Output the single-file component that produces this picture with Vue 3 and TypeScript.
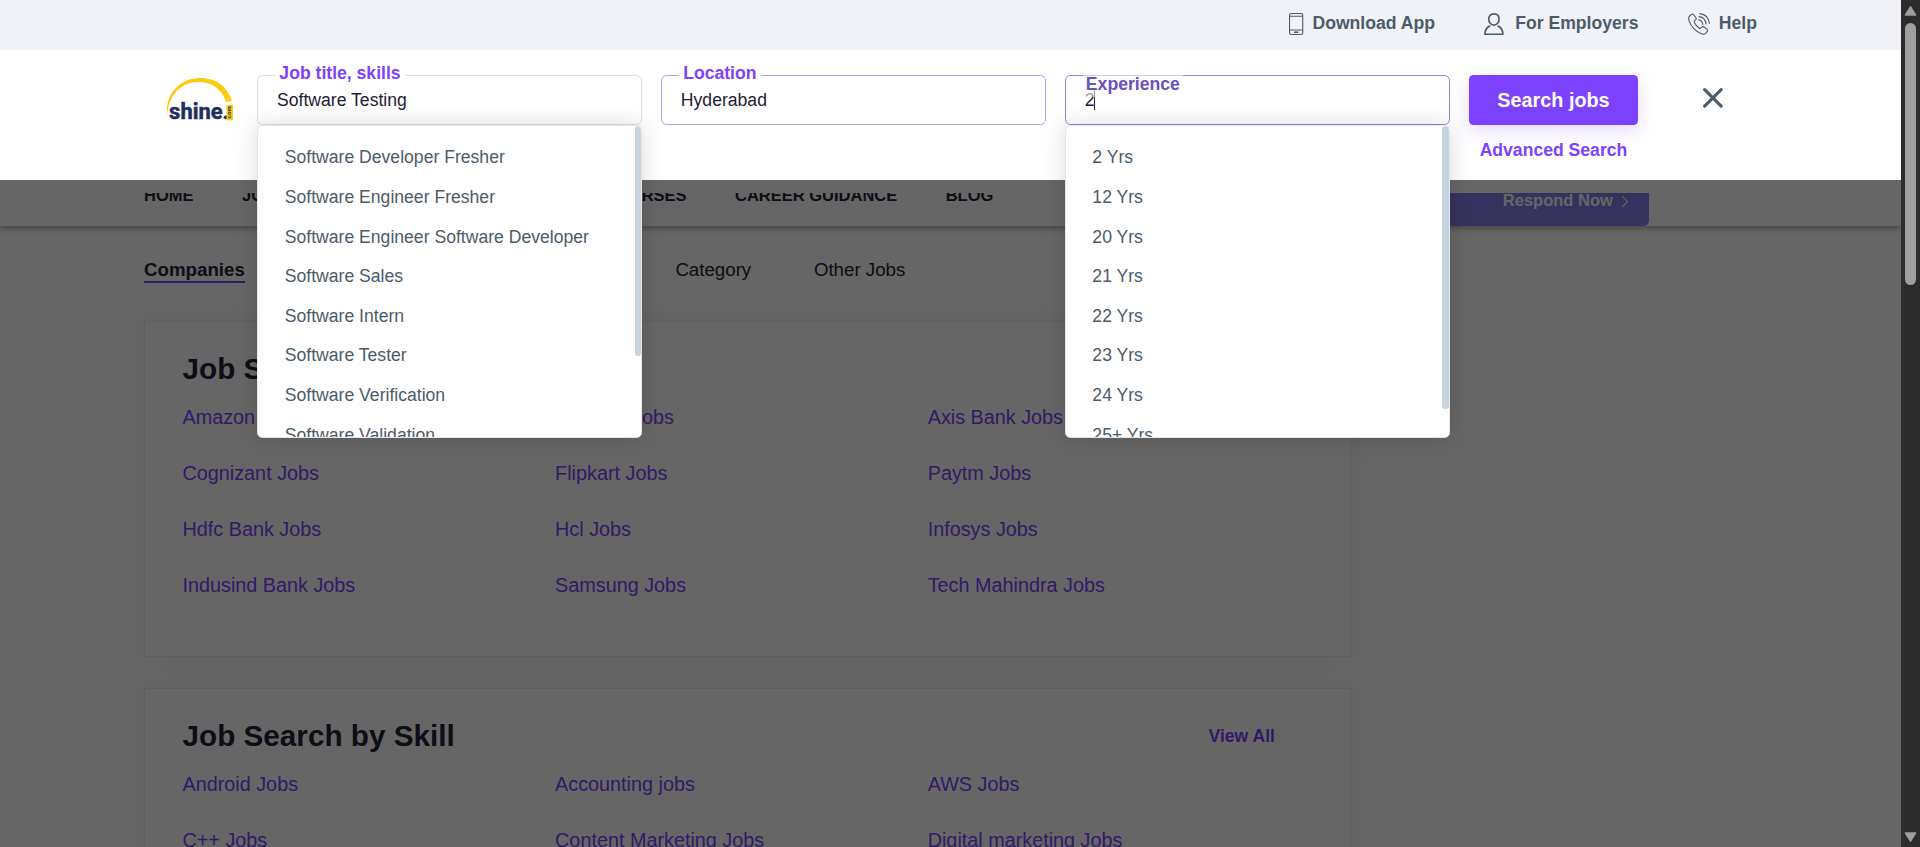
<script setup lang="ts">
import { ref } from 'vue'

interface Field {
  id: string
  label: string
  tone: string
  options: string[]
  thumb: string
}

const values = ref<Record<string, string>>({
  skills: 'Software Testing',
  location: 'Hyderabad',
  experience: '2',
})

const fields: Field[] = [
  {
    id: 'skills',
    label: 'Job title, skills',
    tone: 'plain',
    thumb: 'short',
    options: [
      'Software Developer Fresher',
      'Software Engineer Fresher',
      'Software Engineer Software Developer',
      'Software Sales',
      'Software Intern',
      'Software Tester',
      'Software Verification',
      'Software Validation',
    ],
  },
  { id: 'location', label: 'Location', tone: 'accent', thumb: '', options: [] },
  {
    id: 'experience',
    label: 'Experience',
    tone: 'active',
    thumb: 'long',
    options: ['2 Yrs', '12 Yrs', '20 Yrs', '21 Yrs', '22 Yrs', '23 Yrs', '24 Yrs', '25+ Yrs'],
  },
]

const cards = [
  {
    title: 'Job Search by Company',
    viewAll: false,
    links: [
      'Amazon Jobs', 'Amdocs Jobs', 'Axis Bank Jobs',
      'Cognizant Jobs', 'Flipkart Jobs', 'Paytm Jobs',
      'Hdfc Bank Jobs', 'Hcl Jobs', 'Infosys Jobs',
      'Indusind Bank Jobs', 'Samsung Jobs', 'Tech Mahindra Jobs',
    ],
  },
  {
    title: 'Job Search by Skill',
    viewAll: true,
    links: [
      'Android Jobs', 'Accounting jobs', 'AWS Jobs',
      'C++ Jobs', 'Content Marketing Jobs', 'Digital marketing Jobs',
    ],
  },
]
</script>

<template>
  <div class="window">
    <div class="page">
      <div class="backdrop-page">
        <div class="masthead"></div>
        <nav class="nav" aria-label="Main">
          <div class="nav-lead">
            <a href="#">HOME</a>
            <a href="#">JOBS</a>
          </div>
          <a href="#">COURSES</a>
          <a href="#">CAREER GUIDANCE</a>
          <a href="#">BLOG</a>
          <a href="#" class="respond">
            Respond Now
            <svg width="7" height="12" viewBox="0 0 7 12" aria-hidden="true">
              <path d="M1 1l5 5-5 5" fill="none" stroke="currentColor" />
            </svg>
          </a>
        </nav>
        <div class="tabs">
          <div class="tabs-lead"><a href="#" class="current">Companies</a></div>
          <a href="#">Category</a>
          <a href="#">Other Jobs</a>
        </div>
        <section v-for="card in cards" :key="card.title" class="card">
          <div class="card-head">
            <h2>{{ card.title }}</h2>
            <a v-if="card.viewAll" href="#">View All</a>
          </div>
          <div class="card-links">
            <a v-for="link in card.links" :key="link" href="#">{{ link }}</a>
          </div>
        </section>
        <div class="shade"></div>
      </div>

      <header class="top">
        <div class="topbar">
          <a href="#">
            <svg width="13" height="20" viewBox="0 0 13 20" aria-hidden="true">
              <g fill="none" stroke="currentColor">
                <rect x=".5" y=".5" width="12" height="19" rx="1.5" />
                <path d="M.5 3h12M.5 15.5h12" />
                <path d="M4.5 17.5h4" stroke-width="1.4" />
              </g>
            </svg>
            Download App
          </a>
          <a href="#" class="employers">
            <svg width="18" height="20" viewBox="0 0 18 20" aria-hidden="true">
              <g fill="none" stroke="currentColor" stroke-width="1.5" stroke-linejoin="round">
                <path d="M9 .8c3 0 4.7 2 4.7 4.8S11.800 11 9 11 4.300 8.400 4.300 5.600 6 .8 9 .8z" />
                <path d="M5.600 11.700C2.500 12.900 1 15.800.8 19.300h16.400c-.2-3.500-1.700-6.400-4.800-7.600" />
              </g>
            </svg>
            For Employers
          </a>
          <a href="#">
            <svg width="20" height="20" viewBox="0 0 20 20" aria-hidden="true">
              <g fill="none" stroke="currentColor" stroke-linecap="round" stroke-linejoin="round">
                <path d="M3.200 1.300c.7-.6 1.500-.4 2 .3l1.900 2.600c.5.7.4 1.400-.2 2l-.8.7c-.6.5-.6 1-.3 1.700.9 1.800 2.400 3.700 4.200 5 .6.5 1.200.5 1.700 0l.8-.8c.6-.6 1.300-.6 2-.1l2.700 2c.8.6.9 1.300.3 2l-1.300 1.500c-1 1.100-2.400 1.300-4.100.7C7.200 17.200 2.600 12.200.9 7 .3 5 .6 3.600 1.600 2.700z" />
                <path d="M9.500 6.200c2.200.4 3.600 1.900 4 4.100M10 3.300c3.600.5 6 3 6.400 6.600M10.700.6c4.800.6 8.200 4 8.700 8.900" />
              </g>
            </svg>
            Help
          </a>
        </div>

        <form class="search" @submit.prevent>
          <a href="#" class="logo" aria-label="shine.com">
            <svg width="61" height="39" viewBox="0 0 67 43" aria-hidden="true">
              <path d="M.8 38C-1.500 16 14 0 34 0c16 0 28 9 32 23l-6 1C56 11 46 4 32.500 4 15 4 2.500 17 .8 38z" fill="#fbcc10" />
              <text x="3" y="41" class="logo-name">shine.</text>
              <rect x="60.500" y="27" width="6.500" height="15.500" fill="#fbcc10" />
              <text transform="translate(65.500 40.500) rotate(-90)" class="logo-tld">com</text>
            </svg>
          </a>

          <div v-for="f in fields" :key="f.id" class="field" :class="f.tone">
            <input :id="f.id" v-model="values[f.id]" type="text" autocomplete="off" />
            <span v-if="f.tone === 'active'" class="caret"></span>
            <label :for="f.id">{{ f.label }}</label>
            <div v-if="f.options.length" class="menu">
              <ul role="listbox" :aria-label="f.label">
                <li v-for="o in f.options" :key="o" role="option">{{ o }}</li>
              </ul>
              <span class="menu-thumb" :class="f.thumb"></span>
            </div>
          </div>

          <div class="actions">
            <button type="submit" class="submit">Search jobs</button>
            <a href="#">Advanced Search</a>
          </div>

          <button type="button" class="close" aria-label="Close search">
            <svg width="18" height="18" viewBox="0 0 18 18" aria-hidden="true">
              <path d="M1.500 1.500l15 15M16.500 1.500l-15 15" fill="none" stroke="currentColor" stroke-width="2.800" stroke-linecap="round" />
            </svg>
          </button>
        </form>
      </header>
    </div>

    <div class="scrollbar" aria-hidden="true">
      <svg width="13" height="10" viewBox="0 0 13 10"><path d="M6.500 1l5 8h-10z" fill="#9f9f9f" stroke="#9f9f9f" stroke-width="1.500" stroke-linejoin="round" /></svg>
      <div class="scroll-thumb"></div>
      <svg class="down" width="13" height="10" viewBox="0 0 13 10"><path d="M6.500 9l5-8h-10z" fill="#9f9f9f" stroke="#9f9f9f" stroke-width="1.500" stroke-linejoin="round" /></svg>
    </div>
  </div>
</template>

<style>
body {
  margin: 0;
  overflow: hidden;
}
</style>

<style scoped>
.window {
  display: flex;
  height: 100vh;
  overflow: hidden;
  font-family: 'Liberation Sans', Arial, sans-serif;
}
.page {
  zoom: 1.1;
  position: relative;
  flex: 1;
  min-width: 0;
  overflow: hidden;
  background: #fff;
  font-size: 16px;
  line-height: 18px;
}
a {
  color: inherit;
  text-decoration: none;
}

/* Page behind the search panel */
.backdrop-page {
  position: relative;
  min-height: 100%;
}
.masthead {
  position: relative;
  z-index: 1;
  height: 175px;
  background: #fff;
}
.nav {
  display: flex;
  align-items: center;
  gap: 44px;
  height: 54px;
  margin-top: -24px;
  padding: 0 131px;
  background: #fff;
  box-shadow: 0 2px 6px rgba(0, 0, 0, 0.35);
  color: #212338;
  font-size: 15px;
  font-weight: 700;
}
.nav-lead {
  display: flex;
  gap: 44px;
  width: 375px;
}
.respond {
  display: flex;
  align-items: center;
  gap: 7px;
  box-sizing: border-box;
  height: 54px;
  margin: 0 98px 0 auto;
  padding: 10px 19px 0 160px;
  border-radius: 5px;
  background: #857fe8;
  color: #fff;
}
.tabs {
  display: flex;
  gap: 57px;
  padding: 31px 131px 0;
  margin-bottom: 35px;
  color: #212338;
  font-size: 17px;
  line-height: 19px;
}
.tabs-lead {
  width: 426px;
}
.current {
  display: inline-block;
  border-bottom: 2px solid #7d42ff;
  font-weight: 700;
}
.card {
  box-sizing: border-box;
  width: 1097px;
  margin: 0 0 28px 131px;
  padding: 25px 45px 54px 34px;
  border: 1px solid #ebebeb;
  box-shadow: 0 0 24px rgba(0, 0, 0, 0.06);
}
.card-head {
  display: flex;
  align-items: center;
  justify-content: space-between;
  margin-bottom: 17px;
  padding-right: 23px;
}
.card-head h2 {
  margin: 0;
  color: #212338;
  font-size: 27px;
  line-height: 34px;
}
.card-head a {
  padding-top: 2px;
  color: #7d42ff;
  font-weight: 700;
}
.card-links {
  display: grid;
  grid-template-columns: repeat(3, 1fr);
  row-gap: 30px;
  color: #7d42ff;
  font-size: 18px;
  line-height: 21px;
}
.shade {
  position: absolute;
  inset: 0;
  z-index: 2;
  background: rgba(0, 0, 0, 0.6);
}

/* Search panel */
.top {
  position: absolute;
  inset: 0 0 auto;
  z-index: 3;
  background: #fff;
}
.topbar {
  display: flex;
  align-items: center;
  justify-content: flex-end;
  gap: 45px;
  box-sizing: border-box;
  height: 45px;
  padding: 0 131px 1px;
  background: #f1f2f8;
  color: #4c5b69;
  font-weight: 700;
}
.topbar a {
  display: flex;
  align-items: center;
  gap: 8px;
}
.topbar .employers {
  gap: 10px;
}
.search {
  display: flex;
  align-items: flex-start;
  gap: 17px;
  box-sizing: border-box;
  height: 119px;
  padding: 23px 162px 0 151px;
}
.logo {
  width: 61px;
  margin: 3px 5px 0 0;
}
.logo svg {
  display: block;
  overflow: visible;
}
.logo-name {
  fill: #1f2f5f;
  stroke: #1f2f5f;
  stroke-width: 0.5px;
  font: 700 22px Roboto, 'Liberation Sans', sans-serif;
}
.logo-tld {
  fill: #1f2f5f;
  font: 700 6px 'Liberation Sans', sans-serif;
}
.field {
  position: relative;
  flex: 1;
  min-width: 0;
}
.field input {
  display: block;
  box-sizing: border-box;
  width: 100%;
  height: 46px;
  padding: 0 17px;
  border: 1px solid #dddde2;
  border-radius: 5px;
  outline: 0;
  background: #fff;
  color: #1e2035;
  font: 16px 'Liberation Sans', Arial, sans-serif;
}
.accent input {
  border-color: #b79bee;
}
.active input {
  border-color: #9c7be6;
}
.field label {
  position: absolute;
  top: -10px;
  left: 16px;
  padding: 0 4px;
  background: #fff;
  color: #7d42ff;
  font-weight: 700;
}
.field.active label {
  top: 0;
  padding: 0 3px 2px;
  background: rgba(255, 255, 255, 0.55);
  color: #6b50c0;
}
.caret {
  position: absolute;
  top: 14px;
  left: 26px;
  width: 1px;
  height: 18px;
  background: #1e2035;
}
.menu {
  position: absolute;
  top: 100%;
  left: 0;
  right: 0;
  box-sizing: border-box;
  height: 284px;
  overflow: hidden;
  border: 1px solid #e6e6ea;
  border-radius: 5px;
  background: #fff;
  box-shadow: 0 0 20px rgba(0, 0, 0, 0.15);
}
.menu ul {
  margin: 0;
  padding: 11px 24px;
  list-style: none;
  color: #4c5b69;
  line-height: 36px;
}
.menu-thumb {
  position: absolute;
  top: 0;
  right: 0;
  width: 6px;
  border-radius: 3px;
  background: #c6d5df;
}
.short {
  height: 74%;
}
.long {
  height: 91%;
}
.actions {
  display: flex;
  flex-direction: column;
  align-items: center;
  gap: 14px;
  width: 154px;
  color: #7d42ff;
  font-weight: 700;
}
.submit {
  width: 100%;
  height: 46px;
  border: 0;
  border-radius: 4px;
  background: #7d42ff;
  box-shadow: 0 5px 16px rgba(125, 66, 255, 0.2);
  color: #fff;
  font: 700 18px 'Liberation Sans', Arial, sans-serif;
}
.close {
  margin: 12px 0 0 42px;
  padding: 0;
  border: 0;
  background: none;
  color: #4c5b69;
  line-height: 0;
}

/* Window scrollbar */
.scrollbar {
  display: flex;
  flex-direction: column;
  align-items: center;
  box-sizing: border-box;
  width: 19px;
  padding: 6px 0 5px;
  background: #2c2c2c;
}
.scroll-thumb {
  width: 11px;
  height: 262px;
  margin-top: 7px;
  border-radius: 6px;
  background: #9f9f9f;
}
.down {
  margin-top: auto;
}
</style>
